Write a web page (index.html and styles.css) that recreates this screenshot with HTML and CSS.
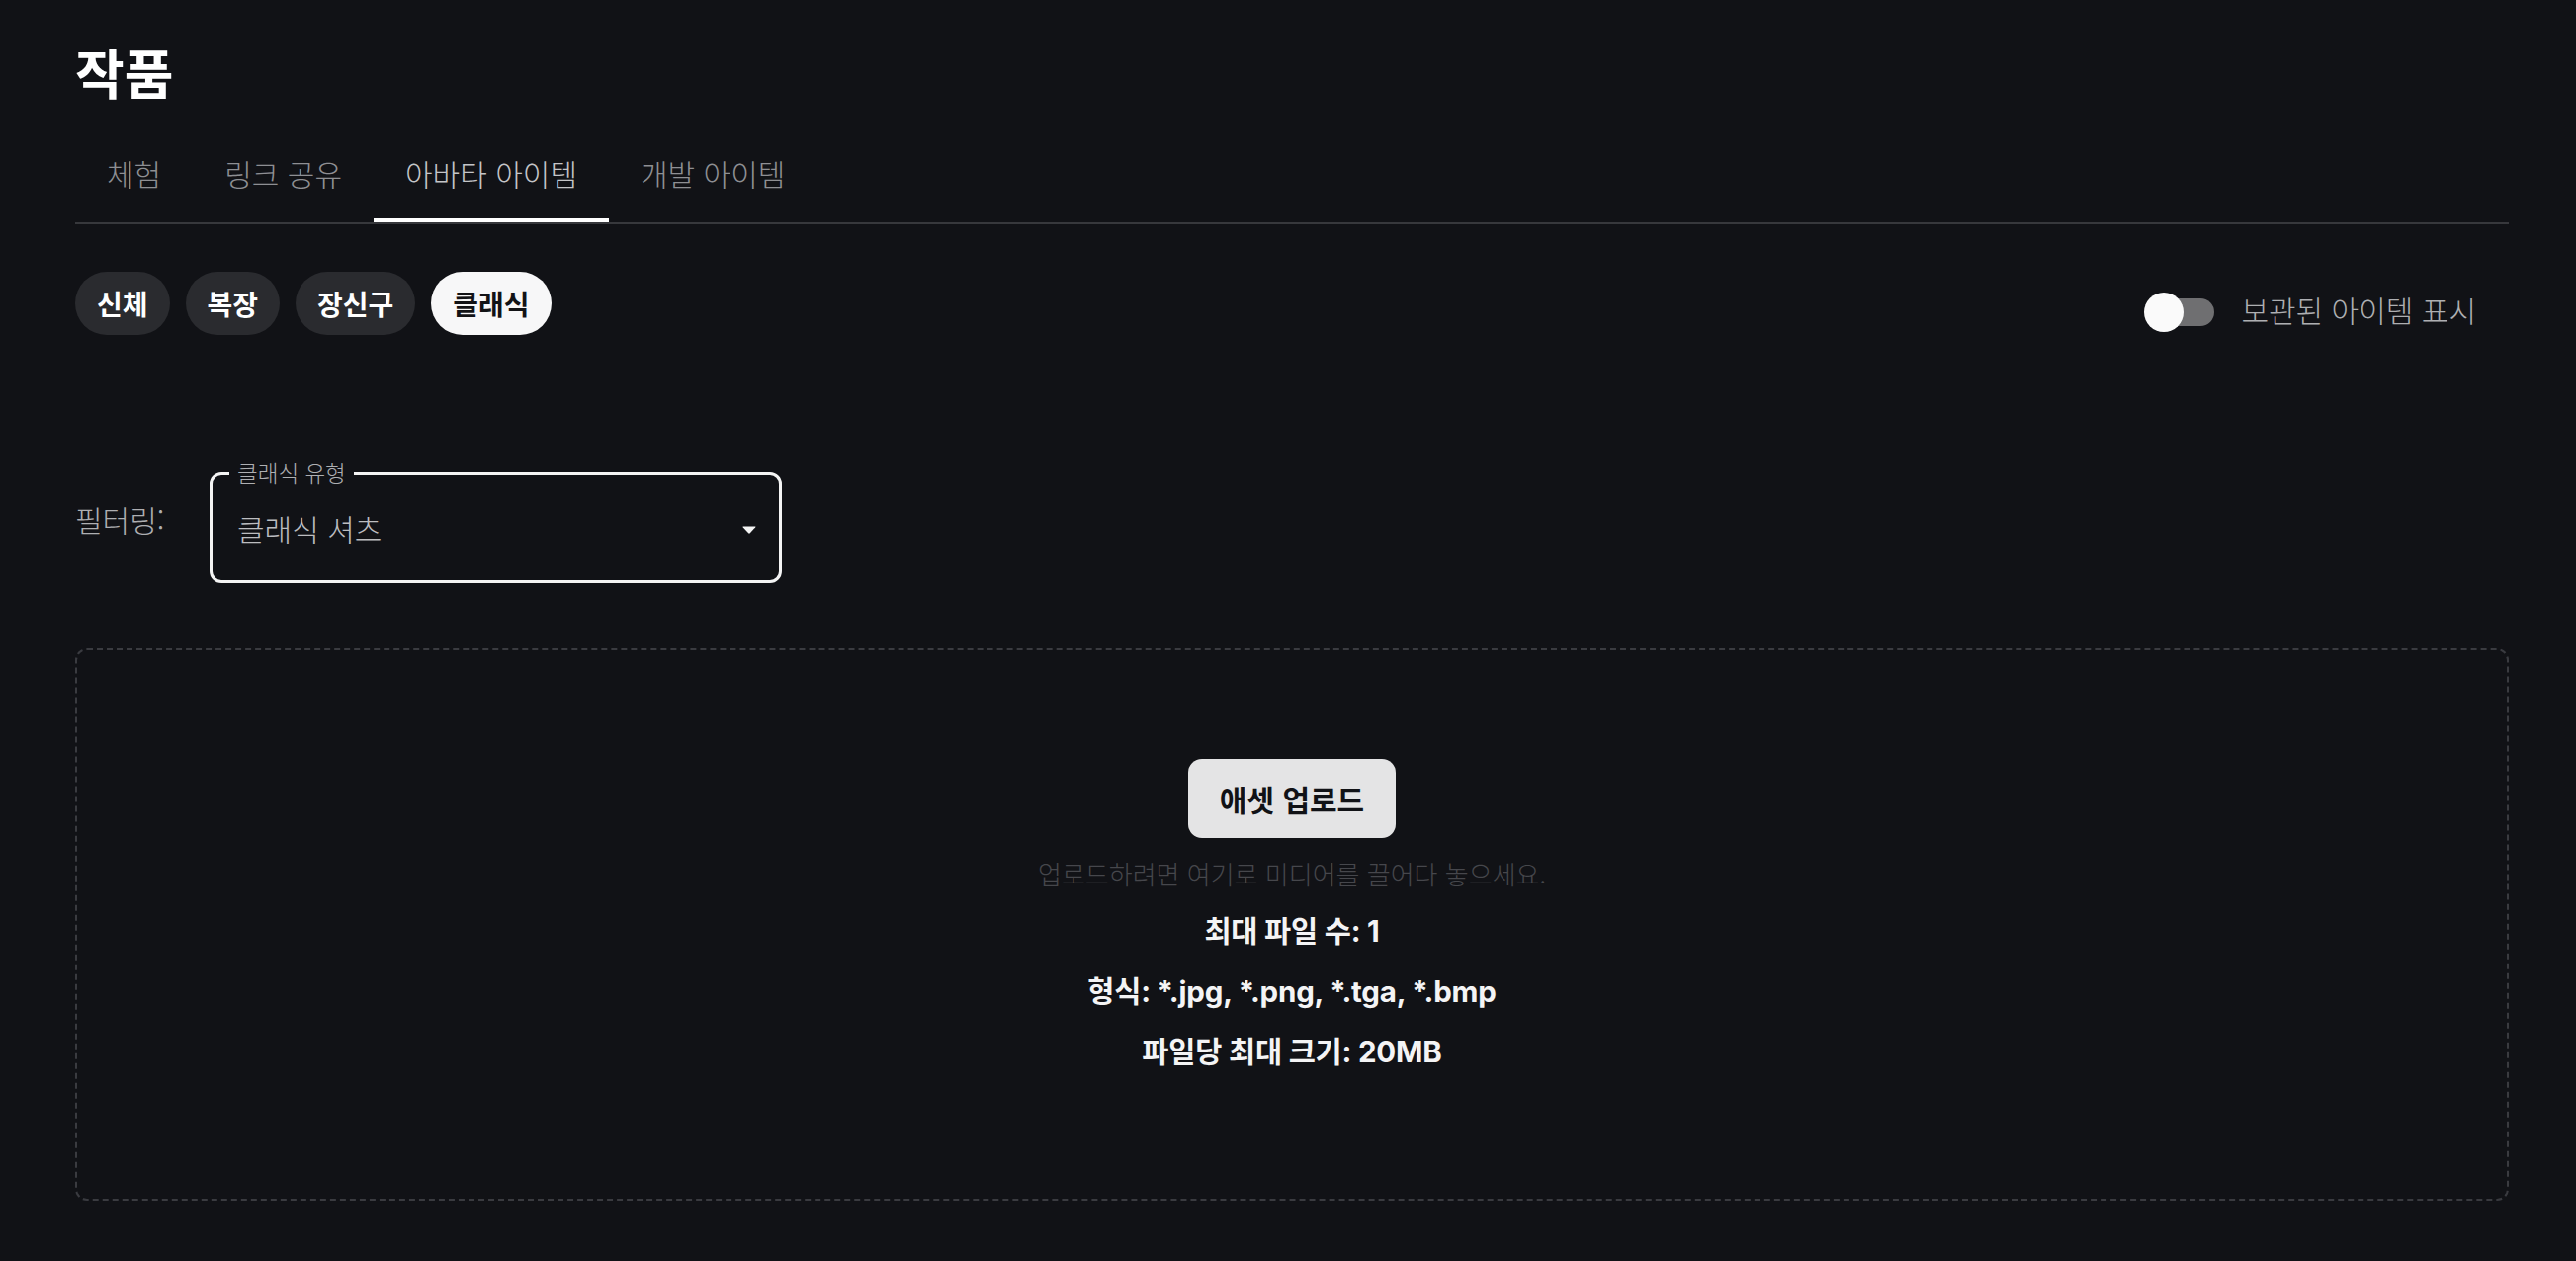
FILE: index.html
```html
<!DOCTYPE html>
<html lang="ko">
<head>
<meta charset="utf-8">
<title>작품</title>
<link rel="stylesheet" href="styles.css">
</head>
<body>
<div class="page">
  <h1 class="title">작품</h1>
  <nav class="tabs">
    <div class="tab">체험</div>
    <div class="tab">링크 공유</div>
    <div class="tab active">아바타 아이템</div>
    <div class="tab">개발 아이템</div>
  </nav>
  <div class="chip-row">
    <div class="chips">
      <button class="chip">신체</button>
      <button class="chip">복장</button>
      <button class="chip">장신구</button>
      <button class="chip active">클래식</button>
    </div>
    <label class="toggle">
      <span class="switch"><span class="track"></span><span class="knob"></span></span>
      <span class="toggle-label">보관된 아이템 표시</span>
    </label>
  </div>
  <div class="filter-row">
    <div class="filter-label">필터링:</div>
    <div class="select">
      <span class="legend">클래식 유형</span>
      <span class="value">클래식 셔츠</span>
      <svg class="arrow" width="14" height="8" viewBox="0 0 14 8"><path d="M1 0.5 H13 Q14 0.5 13.2 1.4 L7.8 7.3 Q7 8 6.2 7.3 L0.8 1.4 Q0 0.5 1 0.5 Z" fill="#f4f4f4"/></svg>
    </div>
  </div>
  <div class="dropzone">
    <button class="upload">애셋 업로드</button>
    <p class="hint">업로드하려면 여기로 미디어를 끌어다 놓으세요.</p>
    <p class="info">최대 파일 수: 1</p>
    <p class="info">형식: *.jpg, *.png, *.tga, *.bmp</p>
    <p class="info">파일당 최대 크기: 20MB</p>
  </div>
</div>
</body>
</html>
```

FILE: styles.css
```css
* { box-sizing: border-box; }
html, body { margin: 0; padding: 0; background: #111216; }
body { font-family: "Noto Sans CJK KR", "Noto Sans", sans-serif; color: #fff; }

.light {
  font-family: "Noto Sans CJK KR Light", "Noto Sans CJK KR DemiLight", "Noto Sans CJK KR", sans-serif;
}

.page { padding: 40px 68px 0 76px; }

.title {
  margin: 0;
  font-size: 54px;
  line-height: 65px;
  font-weight: 700;
  color: #fff;
}

.tabs {
  display: flex;
  border-bottom: 2px solid #37383c;
}
.tab, .toggle-label, .filter-label, .legend, .value, .hint {
  font-family: "Noto Sans CJK KR Light", "Noto Sans CJK KR DemiLight", "Noto Sans CJK KR", sans-serif;
  font-weight: 300;
}
.tab {
  padding: 50px 32px 26px;
  font-size: 30px;
  line-height: 40px;
  color: #8e8f93;
  border-bottom: 4px solid transparent;
}
.tab.active { color: #c4c5c8; border-bottom-color: #ffffff; }

.chip-row {
  margin-top: 48px;
  display: flex;
  justify-content: space-between;
  align-items: flex-start;
}
.chips { display: flex; gap: 16px; }
.chip {
  height: 64px;
  padding: 0 22px;
  border: 0;
  border-radius: 32px;
  background: #2a2b2f;
  color: #fff;
  font-family: "Noto Sans CJK KR", sans-serif;
  font-size: 28px;
  font-weight: 700;
  line-height: 64px;
}
.chip.active { background: #f7f7f8; color: #121316; }

.toggle {
  margin-top: 18px;
  margin-right: 33px;
  display: flex;
  align-items: center;
  gap: 26px;
}
.switch { position: relative; width: 72px; height: 40px; }
.track {
  position: absolute; left: 5px; top: 6px;
  width: 66px; height: 28px;
  border-radius: 14px;
  background: #6f6f71;
}
.knob {
  position: absolute; left: 0; top: 0;
  width: 40px; height: 40px;
  border-radius: 50%;
  background: #fafafa;
}
.toggle-label {
  font-size: 30px;
  line-height: 40px;
  color: #aeafb2;
  margin-bottom: 6px;
}

.filter-row {
  margin-top: 139px;
  display: flex;
  align-items: flex-start;
}
.filter-label {
  width: 136px;
  margin-top: 27px;
  font-size: 30px;
  line-height: 40px;
  color: #aeafb2;
}
.select {
  position: relative;
  width: 579px;
  height: 112px;
  border: 3px solid #f4f4f4;
  border-radius: 12px;
  display: flex;
  align-items: center;
  padding: 0 23px 0 25px;
}
.legend {
  position: absolute;
  left: 17px;
  top: -14px;
  padding: 0 8px;
  background: #111216;
  font-size: 22.5px;
  line-height: 22px;
  color: #aeafb2;
}
.value {
  flex: 1;
  font-size: 30px;
  line-height: 40px;
  color: #bcbdc0;
}
.arrow { display: block; margin-top: 3px; }

.dropzone {
  margin-top: 66px;
  border: 2px dashed #3a3b40;
  border-radius: 12px;
  padding: 110px 0 118px;
  display: flex;
  flex-direction: column;
  align-items: center;
}
.upload {
  width: 210px;
  height: 80px;
  border: 0;
  border-radius: 14px;
  background: #e4e4e5;
  color: #111216;
  font-family: "Noto Sans CJK KR", sans-serif;
  font-size: 30px;
  font-weight: 700;
}
.hint {
  margin: 18px 0 0;
  font-size: 26px;
  line-height: 36px;
  color: #46474c;
}
.info {
  margin: 0;
  font-family: Inter, "Noto Sans CJK KR", sans-serif;
  font-size: 29.5px;
  line-height: 61px;
  font-weight: 700;
  letter-spacing: -0.2px;
  color: #f4f4f5;
}
.hint + .info { margin-top: 10px; }
```
